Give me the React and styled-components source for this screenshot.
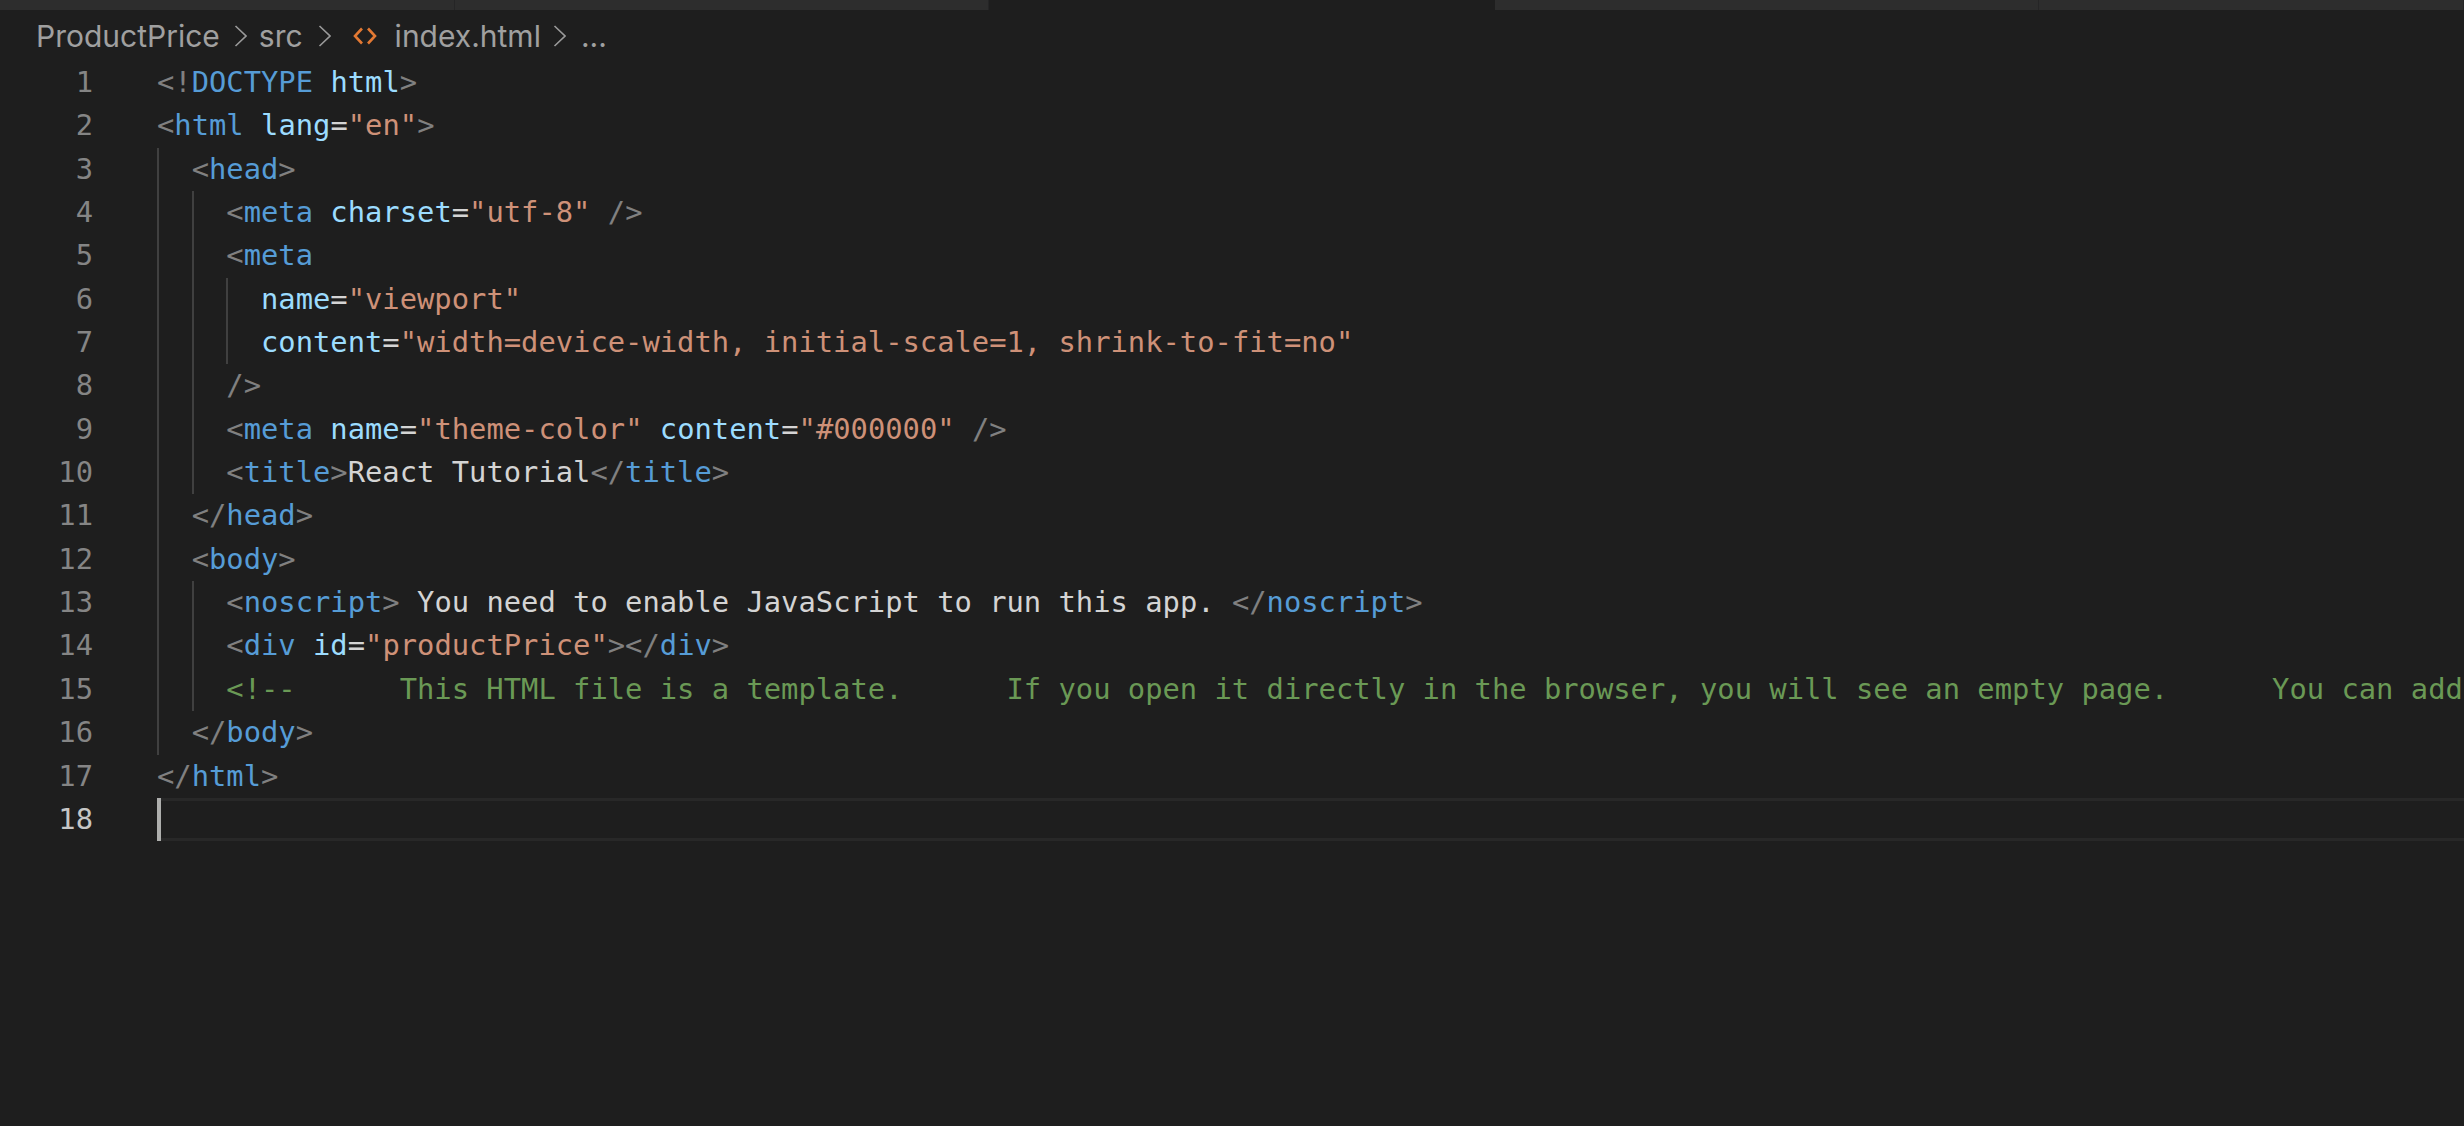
import React from 'react';
import styled, { createGlobalStyle } from 'styled-components';

const GlobalStyle = createGlobalStyle`
  html, body { margin: 0; padding: 0; background: #1e1e1e; }
`;

const Page = styled.div`
  width: 2464px;
  height: 1126px;
  background: #1e1e1e;
  overflow: hidden;
  display: flex;
  flex-direction: column;
`;

const TabBar = styled.div`
  height: 10px;
  display: flex;
  flex: none;
`;

const Tab = styled.div`
  width: ${(p) => p.$width}px;
  flex: none;
  box-sizing: border-box;
  background: ${(p) => (p.$active ? '#1e1e1e' : '#2d2d2d')};
  border-right: ${(p) => (p.$active ? 'none' : '1px solid #252526')};
`;

const Breadcrumbs = styled.div`
  height: 51px;
  box-sizing: border-box;
  padding: 1px 0 0 36px;
  flex: none;
  display: flex;
  align-items: center;
  font-family: Inter, "Noto Sans", sans-serif;
  font-size: 30px;
  color: #a0a0a0;
`;

const Crumb = styled.span`
  line-height: 48px;
`;

const Chevron = styled.svg`
  width: 13px;
  height: 22px;
  margin: 0 ${(p) => p.$after}px 0 ${(p) => p.$before}px;
  flex: none;
`;

const FileIcon = styled.svg`
  width: 24px;
  height: 18px;
  margin: 0 18px 0 0;
  flex: none;
`;

const Editor = styled.div`
  display: flex;
  flex-direction: column;
  font-family: "DejaVu Sans Mono", monospace;
  font-size: 28.8px;
  color: #d4d4d4;
  white-space: pre;
`;

const Row = styled.div`
  height: 43.35px;
  line-height: 43.35px;
  display: flex;
`;

const LineNumber = styled.div`
  width: 93px;
  flex: none;
  text-align: right;
  color: ${(p) => (p.$active ? '#c6c6c6' : '#858585')};
`;

const Code = styled.div`
  margin-left: 64px;
  flex: 1;
  min-width: 0;
  display: flex;
  position: relative;
  box-sizing: border-box;
  border-top: ${(p) => (p.$active ? '3px solid #282828' : 'none')};
  border-bottom: ${(p) => (p.$active ? '3px solid #282828' : 'none')};
`;

const Guide = styled.span`
  width: 34.67px;
  flex: none;
  box-sizing: border-box;
  border-left: 2px solid #404040;
`;

const Cursor = styled.span`
  position: absolute;
  left: 0;
  top: -3px;
  bottom: -3px;
  width: 4px;
  background: #aeafad;
`;

const P = styled.span`color: #808080;`;
const Tag = styled.span`color: #569cd6;`;
const Attr = styled.span`color: #9cdcfe;`;
const Str = styled.span`color: #ce9178;`;
const Comment = styled.span`color: #6a9955;`;
const Text = styled.span`color: #d4d4d4;`;

const Open = ({ name }) => (<><P>&lt;</P><Tag>{name}</Tag></>);
const Close = ({ name }) => (<><P>&lt;/</P><Tag>{name}</Tag><P>&gt;</P></>);
const Prop = ({ name, value }) => (<><Attr>{name}</Attr><Text>=</Text><Str>"{value}"</Str></>);

const lines = [
  { guides: 0, code: <><P>&lt;!</P><Tag>DOCTYPE</Tag> <Attr>html</Attr><P>&gt;</P></> },
  { guides: 0, code: <><Open name="html" /> <Prop name="lang" value="en" /><P>&gt;</P></> },
  { guides: 1, code: <><Open name="head" /><P>&gt;</P></> },
  { guides: 2, code: <><Open name="meta" /> <Prop name="charset" value="utf-8" /> <P>/&gt;</P></> },
  { guides: 2, code: <Open name="meta" /> },
  { guides: 3, code: <Prop name="name" value="viewport" /> },
  { guides: 3, code: <Prop name="content" value="width=device-width, initial-scale=1, shrink-to-fit=no" /> },
  { guides: 2, code: <P>/&gt;</P> },
  { guides: 2, code: <><Open name="meta" /> <Prop name="name" value="theme-color" /> <Prop name="content" value="#000000" /> <P>/&gt;</P></> },
  { guides: 2, code: <><Open name="title" /><P>&gt;</P><Text>React Tutorial</Text><Close name="title" /></> },
  { guides: 1, code: <Close name="head" /> },
  { guides: 1, code: <><Open name="body" /><P>&gt;</P></> },
  { guides: 2, code: <><Open name="noscript" /><P>&gt;</P><Text> You need to enable JavaScript to run this app. </Text><Close name="noscript" /></> },
  { guides: 2, code: <><Open name="div" /> <Prop name="id" value="productPrice" /><P>&gt;&lt;/</P><Tag>div</Tag><P>&gt;</P></> },
  { guides: 2, code: <Comment>{'<!--      This HTML file is a template.      If you open it directly in the browser, you will see an empty page.      You can add'}</Comment> },
  { guides: 1, code: <Close name="body" /> },
  { guides: 0, code: <Close name="html" /> },
  { guides: 0, code: null, active: true },
];

const ChevronIcon = ({ before, after }) => (
  <Chevron $before={before} $after={after} viewBox="0 0 13 22">
    <polyline points="1.5,1 12,11 1.5,21" fill="none" stroke="#9a9a9a" strokeWidth="1.6" />
  </Chevron>
);

function App() {
  return (
    <>
      <GlobalStyle />
      <Page>
        <TabBar>
          <Tab $width={455} />
          <Tab $width={534} />
          <Tab $width={506} $active />
          <Tab $width={544} />
          <Tab $width={425} />
        </TabBar>
        <Breadcrumbs>
          <Crumb>ProductPrice</Crumb>
          <ChevronIcon before={14} after={12} />
          <Crumb>src</Crumb>
          <ChevronIcon before={15} after={22} />
          <FileIcon viewBox="0 0 24 18">
            <polyline points="9,1.5 2,9 9,16.5" fill="none" stroke="#e37933" strokeWidth="2.6" />
            <polyline points="15,1.5 22,9 15,16.5" fill="none" stroke="#e37933" strokeWidth="2.6" />
          </FileIcon>
          <Crumb>index.html</Crumb>
          <ChevronIcon before={12} after={15} />
          <Crumb>...</Crumb>
        </Breadcrumbs>
        <Editor>
          {lines.map((line, i) => (
            <Row key={i}>
              <LineNumber $active={line.active}>{i + 1}</LineNumber>
              <Code $active={line.active}>
                {Array.from({ length: line.guides }, (_, g) => <Guide key={g} />)}
                <span>{line.code}</span>
                {line.active && <Cursor />}
              </Code>
            </Row>
          ))}
        </Editor>
      </Page>
    </>
  );
}

export default App;
